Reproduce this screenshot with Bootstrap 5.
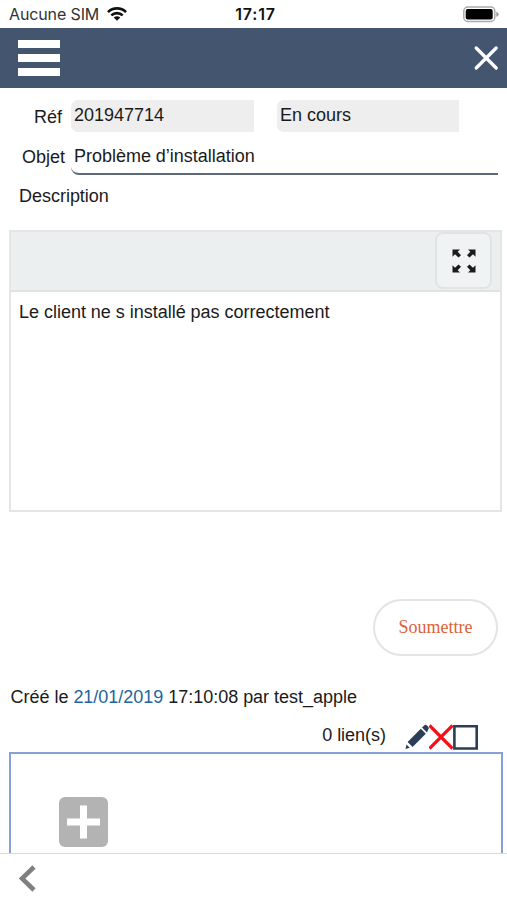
<!DOCTYPE html>
<html lang="fr">
<head>
<meta charset="utf-8">
<meta name="viewport" content="width=device-width, initial-scale=1">
<title>Problème d’installation</title>
<link href="https://cdn.jsdelivr.net/npm/bootstrap@5.3.0/dist/css/bootstrap.min.css" rel="stylesheet">
<style>
body{font-family:"Liberation Sans",Arial,sans-serif;font-size:18px;line-height:22px;letter-spacing:-.02px;color:#1a1a1c;height:900px;overflow:hidden;background:#fff}
svg{display:block;flex:none}
.statusbar{height:28px;font-family:Inter,"Liberation Sans",sans-serif;font-size:16px;padding:1px 8px 0 9px}
.status-net{letter-spacing:-.12px;color:#333}
.status-time{font-weight:600;letter-spacing:.8px;color:#111}
.appbar{height:60.5px;background:#44556f;padding:0 8px 0 17px}
.ref-row{padding:12px 47px 0 34px;height:45px}
.ref-row label{width:37px;padding-top:6px}
.readonly{height:32px;background:#eee;border-radius:7px 0 0 7px;padding:4px 3px}
.readonly.w-ref{width:183px;margin-right:23px}
.readonly.w-state{width:182px}
.obj-row{padding:11px 9px 0 22px;height:42px}
.obj-row label{width:49px;padding-top:2px}
.obj-field{height:31px;border-bottom:2px solid #5d6979;border-bottom-left-radius:8px;padding:1px 3px}
.desc-label{padding:10px 19px 0;height:55px}
.editor{margin:0 5px 0 9px;height:282px;border:2px solid #e3e6e6}
.editor-tools{height:60px;background:#ebeff0;border-bottom:2px solid #dee2e3;padding:0 8px 2px 0}
.expand{width:57px;height:57px;background:#f0f2f3;border:2px solid #e1e4e5;border-radius:8px}
.editor-body{padding:9px 8px}
.submit-row{padding:87px 9px 0}
.btn-submit{width:125px;height:57px;border:2px solid #e4e4e4;border-radius:29px;color:#dc6238;font-family:"Liberation Serif","Times New Roman",serif;font-size:18px;padding:0}
.created{padding:30px 10.5px 0;height:62px}
.created a{color:#2563a0}
.links-row{height:34px;padding:6px 29px 0 0}
.links-row span{margin-right:19px}
.attach{margin:0 4px 0 9px;border:2px solid #86a1d5;border-bottom:0;height:101px;padding:43px 0 0 48px}
.bottombar{height:47px;border-top:1.5px solid #d9d9d9;padding:11px 19px}
</style>
<script src="https://cdn.jsdelivr.net/npm/bootstrap@5.3.0/dist/js/bootstrap.bundle.min.js"></script>
</head>
<body class="d-flex flex-column">
<div class="statusbar d-flex align-items-center justify-content-between position-relative">
  <div class="d-flex align-items-center gap-2"><span class="status-net">Aucune SIM</span>
    <svg width="20" height="14" viewBox="0 0 20 14" fill="none" stroke="#111" stroke-width="2.7"><path d="M1 5.1C6 .2 14 .2 19 5.1M4.3 8.4c3.2-3.1 8.2-3.1 11.4 0"/><path d="M10 13.7 6.7 10.5q3.3-2.4 6.6 0z" fill="#111" stroke="none"/></svg></div>
  <span class="status-time position-absolute start-50 translate-middle-x ps-1">17:17</span>
  <svg width="36" height="17" viewBox="0 0 36 17"><rect x=".8" y="1" width="31" height="14.5" rx="4" fill="none" stroke="#aaa" stroke-width="1.5"/><rect x="2.7" y="3" width="27" height="10.6" rx="2" fill="#000"/><path d="M33.3 5.8q2.3.5 2.3 2.5t-2.3 2.5z" fill="#999"/></svg>
</div>
<nav class="appbar d-flex align-items-center justify-content-between">
  <svg width="44" height="38" viewBox="0 0 44 38" fill="#fff"><path d="M1 1h42v8H1zM1 15h42v8H1zM1 29h42v8H1z"/></svg>
  <svg width="26" height="26" viewBox="0 0 26 26" stroke="#fff" stroke-width="3.3" stroke-linecap="round"><path d="m3.2 3 20 20M23.2 3l-20 20"/></svg>
</nav>
<main class="d-flex flex-column">
  <div class="ref-row d-flex"><label>Réf</label><div class="readonly w-ref">201947714</div><div class="readonly w-state">En cours</div></div>
  <div class="obj-row d-flex"><label>Objet</label><div class="obj-field flex-grow-1">Problème d’installation</div></div>
  <div class="desc-label">Description</div>
  <section class="editor">
    <div class="editor-tools d-flex justify-content-end"><div class="expand d-flex align-items-center justify-content-center">
      <svg width="24" height="24" viewBox="0 0 24 24" fill="#1b1b1b"><g id="quad"><path d="M.5.5H8L5.7 2.8 9 6.2 6.5 8.6 3 5.2.5 7.8z"/></g><use href="#quad" transform="matrix(-1 0 0 1 24 0)"/><use href="#quad" transform="matrix(1 0 0 -1 0 24)"/><use href="#quad" transform="rotate(180 12 12)"/></svg></div></div>
    <div class="editor-body">Le client ne s installé pas correctement</div>
  </section>
  <div class="submit-row d-flex justify-content-end"><button class="btn btn-submit">Soumettre</button></div>
  <div class="created">Créé le <a class="text-decoration-none" href="#">21/01/2019</a> 17:10:08 par test_apple</div>
  <div class="links-row d-flex justify-content-end"><span>0 lien(s)</span>
    <svg width="24" height="26" viewBox="0 0 24 26" fill="#2b3e58"><path d="m1.5 20.5 3.2 3.2-4.2 1.3zM2.6 18 15.8 4.8l5 5L7.6 23zM17 3.6l2.2-2.2q1.4-1.2 2.8.2l1.2 1.2q1.2 1.3 0 2.7L22 8.6z"/></svg>
    <svg width="24" height="26" viewBox="0 0 24 26" stroke="#f50f19" stroke-width="3.2"><path d="m.5 1.5 23 23M23.5 1.5.5 24.5"/></svg>
    <svg width="25" height="26" viewBox="0 0 25 26"><path d="M1.4 2.3h22.3v22.2H1.4z" fill="#fff" stroke="#2b3e58" stroke-width="2.6"/></svg>
  </div>
  <div class="attach"><svg width="49" height="50" viewBox="0 0 49 50"><rect width="49" height="50" rx="6" fill="#b3b3b3"/><path d="M21 8.5h7v13h13v7H28v13h-7v-13H8v-7h13z" fill="#fff"/></svg></div>
</main>
<footer class="bottombar bg-white"><svg width="18" height="28" viewBox="0 0 18 28" fill="none" stroke="#808080" stroke-width="4.6"><path d="M15 2 3 13.5 15 25"/></svg></footer>
</body>
</html>
